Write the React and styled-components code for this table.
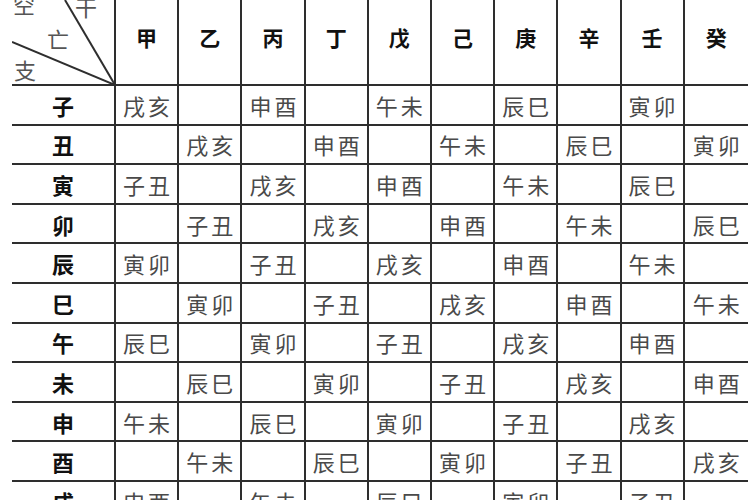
import React from "react";
import styled, { createGlobalStyle } from "styled-components";

const GlobalStyle = createGlobalStyle`
    html, body {
        margin: 0;
        padding: 0;
        background: #fff;
        overflow: hidden;
    }
    body {
        font-family: "Noto Sans CJK SC", "Noto Sans", sans-serif;
    }
`;

const STEMS = ["甲", "乙", "丙", "丁", "戊", "己", "庚", "辛", "壬", "癸"];
const BRANCHES = ["子", "丑", "寅", "卯", "辰", "巳", "午", "未", "申", "酉", "戌"];
const ALL_BRANCHES = ["子", "丑", "寅", "卯", "辰", "巳", "午", "未", "申", "酉", "戌", "亥"];

// 旬空: the two branches left over in the ten-day cycle of a pillar
const voidOf = (s, b) => {
    if ((s - b) % 2 !== 0) return "";
    const start = (((b - s) % 12) + 12) % 12;
    return ALL_BRANCHES[(start + 10) % 12] + ALL_BRANCHES[(start + 11) % 12];
};

const Page = styled.div`
    width: 750px;
    height: 500px;
    overflow: hidden;
    padding-left: 12px;
    box-sizing: border-box;
`;

const Table = styled.div`
    display: grid;
    grid-template-columns: 104px repeat(10, 63.2px);
    grid-template-rows: 86px repeat(11, 39.6px);
`;

const Cell = styled.div`
    box-sizing: border-box;
    display: flex;
    align-items: center;
    justify-content: center;
    border-bottom: 2px solid #2e2e2e;
    border-right: ${(p) => (p.$last ? "none" : "2px solid #2e2e2e")};
`;

const HeadCell = styled(Cell)`
    padding-bottom: 10px;
    font-size: 21px;
    font-weight: 700;
    color: #111;
`;

const RowLabel = styled(Cell)`
    font-size: 22px;
    font-weight: 700;
    color: #111;
`;

const ValueCell = styled(Cell)`
    font-size: 22px;
    font-weight: 400;
    color: #4a4a4a;
    letter-spacing: 3px;
    padding-left: 3px;
`;

const Corner = styled(Cell)`
    position: relative;
    overflow: hidden;
`;

const Diagonals = styled.svg`
    position: absolute;
    left: 0;
    top: 0;
    width: 104px;
    height: 86px;
`;

const CornerText = styled.span`
    position: absolute;
    left: ${(p) => p.$x}px;
    top: ${(p) => p.$y}px;
    font-size: 22px;
    line-height: 1;
    color: #555;
`;

export default function App() {
    return (
        <Page>
            <GlobalStyle />
            <Table>
                <Corner>
                    <Diagonals viewBox="0 0 104 86">
                        <line x1="53" y1="0" x2="103" y2="85" stroke="#2e2e2e" strokeWidth="2" />
                        <line x1="0" y1="42" x2="103" y2="85" stroke="#2e2e2e" strokeWidth="2" />
                    </Diagonals>
                    <CornerText $x={1} $y={-8}>空</CornerText>
                    <CornerText $x={63} $y={-5}>干</CornerText>
                    <CornerText $x={35} $y={27}>亡</CornerText>
                    <CornerText $x={2} $y={58}>支</CornerText>
                </Corner>
                {STEMS.map((s, i) => (
                    <HeadCell key={s} $last={i === STEMS.length - 1}>
                        {s}
                    </HeadCell>
                ))}
                {BRANCHES.map((b, bi) => (
                    <React.Fragment key={b}>
                        <RowLabel>{b}</RowLabel>
                        {STEMS.map((s, si) => (
                            <ValueCell key={s} $last={si === STEMS.length - 1}>
                                {voidOf(si, bi)}
                            </ValueCell>
                        ))}
                    </React.Fragment>
                ))}
            </Table>
        </Page>
    );
}
